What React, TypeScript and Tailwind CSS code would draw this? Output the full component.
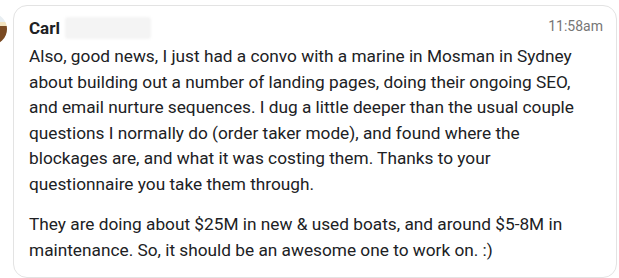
export default function App() {
  return (
    <div className="w-[619px] h-[278px] bg-white overflow-hidden flex items-start pt-[5px]" style={{ fontFamily: 'Roboto, "Liberation Sans", sans-serif' }}>
      <div className="shrink-0 w-8 h-8 rounded-full ml-[-25px] mt-[8px] mr-[6px] overflow-hidden flex flex-col">
        <div className="h-[9px] bg-[#e8eef2]" />
        <div className="h-[4px] bg-[#f2e3c0]" />
        <div className="flex-1 bg-[#7a4a22]" />
      </div>
      <div className="flex-1 mr-[2px] h-[273px] border border-[#e3e3e3] rounded-[14px] pl-[15px] pr-[13px] pt-[9px] text-[#202124]">
        <div className="flex items-start justify-between h-[29px]">
          <div className="flex items-center">
            <span className="text-[17px] font-bold leading-[26px]">Carl</span>
            <span className="ml-[5px] w-[86px] h-[22px] bg-[#f4f4f4] rounded-[3px] blur-[1px]" />
          </div>
          <span className="text-[14px] text-[#767676] leading-[20px] mt-[1px]">11:58am</span>
        </div>
        <div className="pr-[12px]">
          <p className="text-[17.25px] leading-[25.5px]">
            Also, good news, I just had a convo with a marine in Mosman in Sydney about building out a number of landing pages, doing their ongoing SEO, and email nurture sequences. I dug a little deeper than the usual couple questions I normally do (order taker mode), and found where the blockages are, and what it was costing them. Thanks to your questionnaire you take them through.
          </p>
          <p className="text-[17.25px] leading-[25.5px] mt-[15px]">
            They are doing about $25M in new &amp; used boats, and around $5-8M in maintenance. So, it should be an awesome one to work on. :)
          </p>
        </div>
      </div>
    </div>
  );
}
